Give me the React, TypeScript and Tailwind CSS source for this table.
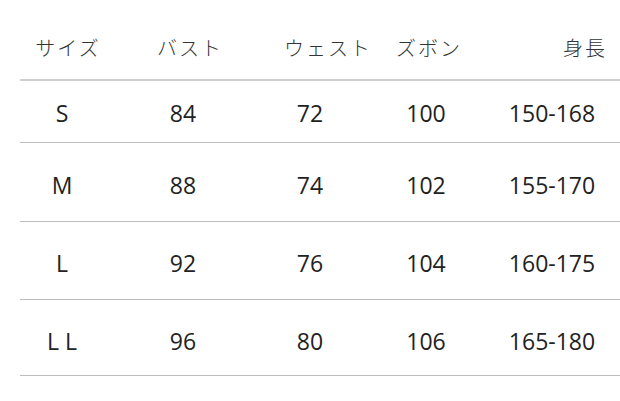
const HEADERS = [
  { label: 'サイズ', pad: 'pl-[12px]' },
  { label: 'バスト', pad: 'pl-[14px]' },
  { label: 'ウェスト', pad: 'pl-[22px]' },
  { label: 'ズボン', pad: 'pl-[6px]' },
  { label: '身長', pad: 'pl-[66px]' },
]

const ROWS = [
  { size: 'S', bust: '84', waist: '72', pants: '100', height: '150-168', h: 'h-[62px]', pt: 'pt-[4px]' },
  { size: 'M', bust: '88', waist: '74', pants: '102', height: '155-170', h: 'h-[79px]', pt: 'pt-[6px]' },
  { size: 'L', bust: '92', waist: '76', pants: '104', height: '160-175', h: 'h-[78px]', pt: 'pt-[6px]' },
  { size: 'L L', bust: '96', waist: '80', pants: '106', height: '165-180', h: 'h-[76px]', pt: 'pt-[8px]' },
]

const GRID = 'grid grid-cols-[84px_158px_96px_136px_116px] items-center'

export default function App() {
  return (
    <div className="w-[620px] h-[401px] bg-white overflow-hidden">
      <div className="ml-[20px] w-[600px]">
        {/* header */}
        <div
          className={`${GRID} h-[81px] border-b-2 border-[#cfcfcf] text-[20px] tracking-[2px] font-light text-[#333]`}
          style={{ fontFamily: '"Noto Sans CJK JP", sans-serif' }}
        >
          {HEADERS.map((h) => (
            <div key={h.label} className={`text-center whitespace-nowrap pt-[16px] ${h.pad}`}>
              {h.label}
            </div>
          ))}
        </div>

        {/* body */}
        {ROWS.map((r) => (
          <div
            key={r.size}
            className={`${GRID} ${r.h} ${r.pt} border-b border-[#bdbdbd] text-[23px] text-[#222]`}
            style={{ fontFamily: '"Open Sans", sans-serif' }}
          >
            <div className="text-center">{r.size}</div>
            <div className="text-center">{r.bust}</div>
            <div className="text-center">{r.waist}</div>
            <div className="text-center">{r.pants}</div>
            <div className="text-center">{r.height}</div>
          </div>
        ))}
      </div>
    </div>
  )
}
